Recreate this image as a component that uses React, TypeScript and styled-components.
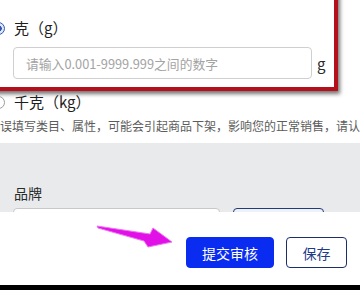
import React from 'react';
import styled, { createGlobalStyle } from 'styled-components';

const GlobalStyle = createGlobalStyle`
  html, body {
    margin: 0;
    padding: 0;
    background: #ffffff;
  }
  body {
    font-family: "Noto Sans CJK SC", "Noto Sans", sans-serif;
    color: #222;
  }
`;

export default function App() {
    return (
        <>
            <GlobalStyle />
            <Page>
                <Form>
                    <Highlight>
                        <OptionRow>
                            <Radio $checked />
                            <OptionLabel>克（g）</OptionLabel>
                        </OptionRow>
                        <InputRow>
                            <TextInput placeholder="请输入0.001-9999.999之间的数字" />
                            <Unit>g</Unit>
                        </InputRow>
                    </Highlight>

                    <OptionRow $outside>
                        <Radio />
                        <OptionLabel>千克（kg）</OptionLabel>
                    </OptionRow>

                    <Warning>误填写类目、属性，可能会引起商品下架，影响您的正常销售，请认真核对后再提交</Warning>
                </Form>

                <GraySection>
                    <FieldLabel>品牌</FieldLabel>
                    <BrandRow>
                        <BrandInput />
                        <BrandButton />
                    </BrandRow>
                </GraySection>

                <Footer>
                    <Arrow viewBox="0 0 90 34" width="90" height="34">
                        <polygon
                            points="7,6 60,14 63,8 82,22 58,27 54,21 8,8"
                            fill="#e010e6"
                            stroke="#f070f4"
                            strokeWidth="1"
                            strokeLinejoin="round"
                        />
                    </Arrow>
                    <PrimaryButton>提交审核</PrimaryButton>
                    <OutlineButton>保存</OutlineButton>
                </Footer>
                <BottomBar />
            </Page>
        </>
    );
}

const Page = styled.div`
  width: 360px;
  height: 290px;
  overflow: hidden;
  display: flex;
  flex-direction: column;
  background: #fff;
`;

const Form = styled.div`
  display: flex;
  flex-direction: column;
`;

const Highlight = styled.div`
  margin: -12px 0 0 -24px;
  width: 362px;
  box-sizing: border-box;
  border: 4px solid #b3101c;
  box-shadow: 2px 3px 4px rgba(0, 0, 0, 0.55);
  padding: 26px 0 8px 12px;
  display: flex;
  flex-direction: column;
  gap: 9px;
  background: #fff;
`;

const OptionRow = styled.div<{ $outside?: boolean }>`
  display: flex;
  align-items: center;
  gap: 9px;
  height: 20px;
  margin-left: ${({ $outside }) => ($outside ? '-8px' : '0')};
  margin-top: ${({ $outside }) => ($outside ? '1px' : '0')};
`;

const Radio = styled.span<{ $checked?: boolean }>`
  width: 13px;
  height: 13px;
  box-sizing: border-box;
  border-radius: 50%;
  border: 1px solid ${({ $checked }) => ($checked ? '#2f55b8' : '#9a9a9a')};
  background: ${({ $checked }) =>
        $checked ? 'radial-gradient(circle, #2f55b8 0 3px, #dfe7f7 3.5px)' : '#fff'};
  flex-shrink: 0;
`;

const OptionLabel = styled.span`
  font-size: 15px;
  line-height: 20px;
  color: #1e1e1e;
`;

const InputRow = styled.div`
  display: flex;
  align-items: center;
  gap: 5px;
  margin-left: 21px;
`;

const TextInput = styled.input`
  width: 299px;
  height: 32px;
  box-sizing: border-box;
  border: 1px solid #cfcfcf;
  border-radius: 4px;
  padding: 0 12px;
  font-family: "Noto Sans CJK SC", "Noto Sans", sans-serif;
  font-size: 12.8px;
  color: #333;
  outline: none;
  &::placeholder {
    color: #a3a3a3;
  }
`;

const Unit = styled.span`
  font-size: 15px;
  color: #2a2a2a;
`;

const Warning = styled.div`
  margin-top: 5px;
  font-size: 12px;
  line-height: 18px;
  color: #5c5c5c;
  white-space: nowrap;
  overflow: hidden;
`;

const GraySection = styled.div`
  margin-top: 8px;
  height: 69px;
  box-sizing: border-box;
  background: #e9eaec;
  padding: 40px 0 0 14px;
  overflow: hidden;
`;

const FieldLabel = styled.div`
  font-size: 14px;
  line-height: 20px;
  color: #2a2a2a;
`;

const BrandRow = styled.div`
  display: flex;
  gap: 13px;
  margin-top: 5px;
  margin-left: -1px;
`;

const BrandInput = styled.div`
  width: 205px;
  height: 32px;
  background: #fff;
  border: 1px solid #c8c8c8;
  border-radius: 4px;
`;

const BrandButton = styled.div`
  width: 89px;
  height: 32px;
  background: #eef1f8;
  border: 1px solid #233a78;
  border-radius: 4px;
`;

const Footer = styled.div`
  position: relative;
  height: 73px;
  box-sizing: border-box;
  background: #fff;
  display: flex;
  justify-content: flex-end;
  align-items: flex-start;
  gap: 12px;
  padding: 25px 13px 0 0;
`;

const Arrow = styled.svg`
  position: absolute;
  left: 90px;
  top: 8px;
`;

const ButtonBase = styled.button`
  height: 31px;
  border-radius: 4px;
  font-family: "Noto Sans CJK SC", "Noto Sans", sans-serif;
  font-size: 14px;
  padding: 0;
  cursor: pointer;
`;

const PrimaryButton = styled(ButtonBase)`
  width: 88px;
  background: #0a2cf0;
  border: 1px solid #0a2cf0;
  color: #fff;
`;

const OutlineButton = styled(ButtonBase)`
  width: 61px;
  background: #fff;
  border: 1px solid #1b2f66;
  color: #1e3a8c;
`;

const BottomBar = styled.div`
  flex: 1;
  background: #000;
`;
